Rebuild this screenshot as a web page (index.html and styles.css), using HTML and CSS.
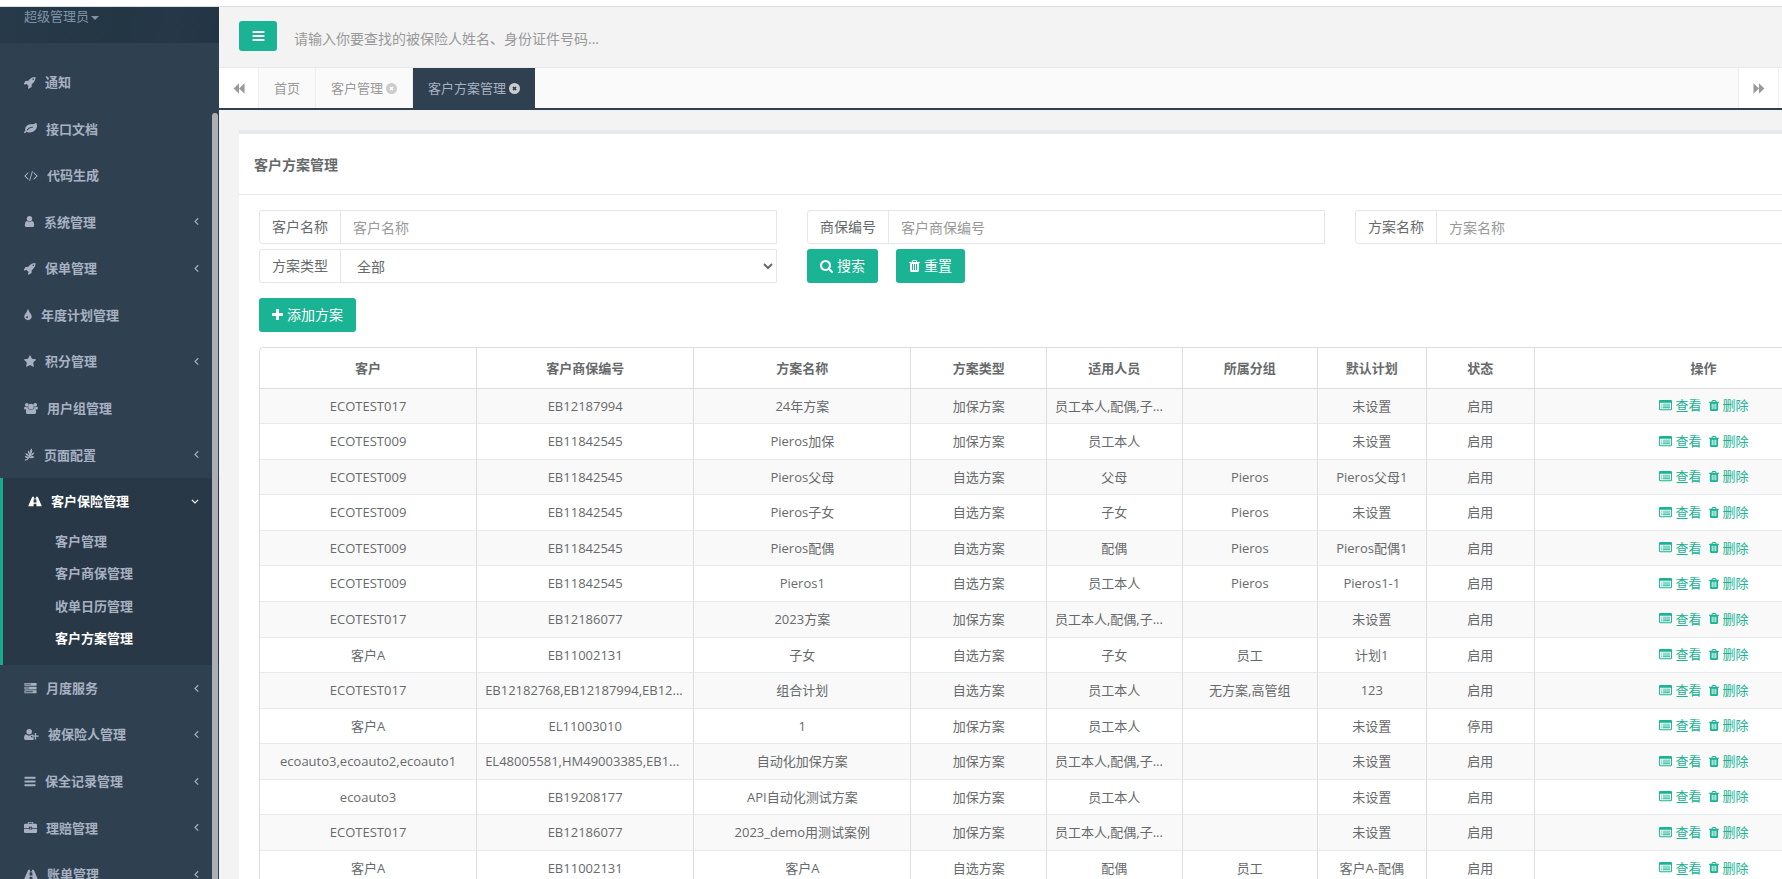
FILE: index.html
```html
<!DOCTYPE html>
<html lang="zh-CN">
<head>
<meta charset="utf-8">
<title>客户方案管理</title>
<link rel="stylesheet" href="styles.css">
</head>
<body>
<svg class="sprite" aria-hidden="true">
  <symbol id="bars" viewBox="128 0 1536 1792"><path d="M1664 1344v128q0 26-19 45t-45 19h-1408q-26 0-45-19t-19-45v-128q0-26 19-45t45-19h1408q26 0 45 19t19 45zm0-512v128q0 26-19 45t-45 19h-1408q-26 0-45-19t-19-45v-128q0-26 19-45t45-19h1408q26 0 45 19t19 45zm0-512v128q0 26-19 45t-45 19h-1408q-26 0-45-19t-19-45v-128q0-26 19-45t45-19h1408q26 0 45 19t19 45z"/></symbol>
  <symbol id="rocket" viewBox="64 0 1664 1792"><path d="M1440 448q0-40-28-68t-68-28-68 28-28 68 28 68 68 28 68-28 28-68zm224-288q0 249-75.500 430.500t-253.500 360.500q-81 80-195 176l-20 379q-2 16-16 26l-384 224q-7 4-16 4-12 0-23-9l-64-64q-13-14-8-32l85-276-281-281-276 85q-3 1-9 1-14 0-23-9l-64-64q-17-19-5-39l224-384q10-14 26-16l379-20q96-114 176-195 188-187 358-258t431-71q14 0 24 9.500t10 22.500z"/></symbol>
  <symbol id="leaf" viewBox="0 0 1792 1792"><path d="M1280 704q0-26-19-45t-45-19q-172 0-318 49.500t-259.500 134-235.500 219.500q-19 21-19 45 0 26 19 45t45 19q24 0 45-19 27-24 74-71t67-66q137-124 268.500-176t313.500-52q26 0 45-19t19-45zm512-198q0 95-20 193-46 224-184.500 383t-357.500 268q-214 108-438 108-148 0-286-47-15-5-88-42t-96-37q-16 0-39.500 32t-45 70-52.500 70-60 32q-43 0-63.500-17.500t-45.500-59.500q-2-4-6-11t-5.500-10-3-9.500-1.500-13.500q0-35 31-73.500t68-65.500 68-56 31-48q0-4-14-38t-16-44q-9-51-9-104 0-115 43.500-220t119-184.500 170.500-139 204-95.500q55-18 145-25.500t179.500-9 178.500-6 163.500-24 113.500-56.500l29.500-29.500 29.500-28 27-20 36.500-16 43.500-4.500q39 0 70.500 46t47.500 112 24 124 8 96z"/></symbol>
  <symbol id="code" viewBox="-64 0 1920 1792"><path d="M553 1399l-50 50q-10 10-23 10t-23-10l-466-466q-10-10-10-23t10-23l466-466q10-10 23-10t23 10l50 50q10 10 10 23t-10 23l-393 393 393 393q10 10 10 23t-10 23zm591-1067l-373 1291q-4 13-15.500 19.500t-23.500 2.500l-62-17q-13-4-19.500-15.500t-2.500-24.500l373-1291q4-13 15.500-19.500t23.500-2.500l62 17q13 4 19.500 15.500t2.500 24.500zm657 651l-466 466q-10 10-23 10t-23-10l-50-50q-10-10-10-23t10-23l393-393-393-393q-10-10-10-23t10-23l50-50q10-10 23-10t23 10l466 466q10 10 10 23t-10 23z"/></symbol>
  <symbol id="user" viewBox="192 0 1408 1792"><path d="M1536 1399q0 109-62.500 187t-150.500 78h-854q-88 0-150.500-78t-62.500-187q0-85 8.500-160.500t31.500-152 58.500-131 94-89 134.500-34.500q131 128 313 128t313-128q76 0 134.500 34.500t94 89 58.500 131 31.500 152 8.500 160.500zm-256-887q0 159-112.500 271.500t-271.500 112.500-271.500-112.500-112.500-271.500 112.500-271.500 271.500-112.500 271.500 112.500 112.500 271.500z"/></symbol>
  <symbol id="tint" viewBox="384 0 1024 1792"><path d="M896 1152q0-36-20-69-1-1-15.500-22.500t-25.500-38-25-44-21-50.500q-4-16-21-16t-21 16q-7 23-21 50.500t-25 44-25.500 38-15.500 22.500q-20 33-20 69 0 53 37.500 90.500t90.500 37.500 90.500-37.500 37.500-90.500zm512-128q0 212-150 362t-362 150-362-150-150-362q0-145 81-275 6-9 62.500-90.500t101-151 99.500-178 83-201.500q9-30 34-47t51-17 51.500 17 33.500 47q28 93 83 201.500t99.500 178 101 151 62.500 90.500q81 127 81 275z"/></symbol>
  <symbol id="star" viewBox="64 0 1664 1792"><path d="M1728 647q0 22-26 48l-363 354 86 500q1 7 1 20 0 21-10.500 35.500t-30.500 14.500q-19 0-40-12l-449-236-449 236q-22 12-40 12-21 0-31.500-14.500t-10.500-35.500q0-6 2-20l86-500-364-354q-25-27-25-48 0-37 56-46l502-73 225-455q19-41 49-41t49 41l225 455 502 73q56 9 56 46z"/></symbol>
  <symbol id="users" viewBox="0 0 1920 1792"><circle cx="384" cy="384" r="256"/><circle cx="1536" cy="384" r="256"/><circle cx="960" cy="640" r="384"/><path d="M593 896Q431 901 328 1024H194Q0 1024 0 858 0 640 90 640q60 0 160 55t290 25q-28 90 53 176zM1327 896q162 5 265 128h134q194 0 194-166 0-218-90-218-60 0-160 55t-290 25q28 90-53 176zM523 1664q-267 0-267-260 0-508 250-508 60 0 190 96t264 96 264-96 190-96q250 0 250 508 0 260-267 260z"/></symbol>
  <symbol id="plant" viewBox="0 0 1408 1792"><path d="M40 1590Q300 1590 460 1420 160 1440 40 1140q300-90 500 150l50-110Q240 1090 90 740q370-30 540 290l20-120Q420 640 510 310q270 180 250 520Q730 420 930 40q300 320 10 760l-60 160Q1010 660 1370 620q-80 380-540 480l-50 90q270-160 610 0-240 300-680 170Q480 1730 70 1760z"/></symbol>
  <symbol id="road" viewBox="0 0 1920 1792"><path fill-rule="evenodd" d="M610 256h210l-20 230h320l-20-230h210q40 0 60 50l507 1170q20 60-20 60H1170l-30-320H780l-30 320H63q-40 0-20-60L550 306q20-50 60-50zM785 600l-35 430h420l-35-430z"/></symbol>
  <symbol id="server" viewBox="0 0 1792 1792"><path fill-rule="evenodd" d="M64 128h1664v384H64zm128 128v128h768V256zM64 640h1664v384H64zm128 128v128h512V768zM64 1152h1664v384H64zm128 128v128h1024v-128z"/><path opacity=".5" d="M192 256h1200v128H192zm0 512h1200v128H192z"/></symbol>
  <symbol id="user-plus" viewBox="0 0 2048 1792"><circle cx="704" cy="512" r="384"/><path d="M1664 1024h352v192h-352v352h-192v-352h-352v-192h352V672h192zM960 1088v192h360v330q-40 54-146 54H267Q0 1664 0 1404q0-508 250-508 60 0 190 84t264 84 264-84 190-84q120 0 170 192z"/></symbol>
  <symbol id="briefcase" viewBox="0 0 1792 1792"><path d="M640 384h512V256H640zM0 960V544q0-160 160-160h352V224q0-96 96-96h576q96 0 96 96v160h352q160 0 160 160v416h-672V800H672v160zm800-32h192v128H800zM0 1056h672v128h448v-128h672v448q0 160-160 160H160Q0 1664 0 1504z"/></symbol>
  <symbol id="angle-left" viewBox="0 0 640 1792"><path fill="none" stroke="currentColor" stroke-width="170" d="M560 440L120 880l440 440"/></symbol>
  <symbol id="angle-down" viewBox="0 0 1152 1792"><path fill="none" stroke="currentColor" stroke-width="170" d="M120 660l456 450 456-450"/></symbol>
  <symbol id="backward" viewBox="0 0 1664 1792"><path d="M840 180v1430L80 896zM1600 180v1430L840 896z"/></symbol>
  <symbol id="forward" viewBox="0 0 1664 1792"><path d="M824 180v1430l760-714zM64 180v1430l760-714z"/></symbol>
  <symbol id="close" viewBox="128 0 1536 1792"><path fill-rule="evenodd" d="M1664 896a768 768 0 1 0-1536 0 768 768 0 0 0 1536 0zM760 600l136 136 136-136 160 160-136 136 136 136-160 160-136-136-136 136-160-160 136-136-136-136z"/></symbol>
  <symbol id="plus" viewBox="192 0 1408 1792"><path d="M1600 736v192q0 40-28 68t-68 28h-416v416q0 40-28 68t-68 28h-192q-40 0-68-28t-28-68v-416h-416q-40 0-68-28t-28-68v-192q0-40 28-68t68-28h416v-416q0-40 28-68t68-28h192q40 0 68 28t28 68v416h416q40 0 68 28t28 68z"/></symbol>
  <symbol id="search" viewBox="64 0 1664 1792"><path d="M1216 832q0-185-131.500-316.500t-316.500-131.500-316.500 131.500-131.500 316.500 131.500 316.500 316.500 131.500 316.500-131.500 131.500-316.500zm512 832q0 52-38 90t-90 38q-54 0-90-38l-343-342q-179 124-399 124-143 0-273.500-55.500t-225-150-150-225-55.500-273.500 55.500-273.500 150-225 225-150 273.500-55.500 273.500 55.500 225 150 150 225 55.500 273.500q0 220-124 399l343 343q37 37 37 90z"/></symbol>
  <symbol id="trash" viewBox="192 0 1408 1792"><path d="M704 1376v-704q0-14-9-23t-23-9h-64q-14 0-23 9t-9 23v704q0 14 9 23t23 9h64q14 0 23-9t9-23zm256 0v-704q0-14-9-23t-23-9h-64q-14 0-23 9t-9 23v704q0 14 9 23t23 9h64q14 0 23-9t9-23zm256 0v-704q0-14-9-23t-23-9h-64q-14 0-23 9t-9 23v704q0 14 9 23t23 9h64q14 0 23-9t9-23zm-544-992h448l-48-117q-7-9-17-11h-317q-10 2-17 11zm928 32v64q0 14-9 23t-23 9h-96v948q0 83-47 143.500t-113 60.500h-832q-66 0-113-58.500t-47-141.500v-952h-96q-14 0-23-9t-9-23v-64q0-14 9-23t23-9h309l70-167q15-37 54-63t79-26h320q40 0 79 26t54 63l70 167h309q14 0 23 9t9 23z"/></symbol>
  <symbol id="list" viewBox="0 0 1792 1792"><path fill-rule="evenodd" d="M160 128h1472q160 0 160 160v1088q0 160-160 160H160Q0 1536 0 1376V288q0-160 160-160zm-32 384v832q0 64 64 64h1408q64 0 64-64V512z"/><path d="M256 640h128v128H256zm256 0h1024v128H512zM256 896h128v128H256zm256 0h1024v128H512zm-256 256h128v128H256zm256 0h1024v128H512z"/></symbol>
</svg>

<div class="app">
  <nav class="sidebar" aria-label="主菜单">
    <div class="profile"><a href="#">超级管理员<span class="caret"></span></a></div>
    <ul class="menu">
      <li><a href="#"><svg class="icon w12"><use href="#rocket"/></svg>通知</a></li>
      <li><a href="#"><svg class="icon w13"><use href="#leaf"/></svg>接口文档</a></li>
      <li><a href="#"><svg class="icon w14"><use href="#code"/></svg>代码生成</a></li>
      <li><a href="#"><svg class="icon w11"><use href="#user"/></svg>系统管理<svg class="icon arrow"><use href="#angle-left"/></svg></a></li>
      <li><a href="#"><svg class="icon w12"><use href="#rocket"/></svg>保单管理<svg class="icon arrow"><use href="#angle-left"/></svg></a></li>
      <li><a href="#"><svg class="icon w8"><use href="#tint"/></svg>年度计划管理</a></li>
      <li><a href="#"><svg class="icon w12"><use href="#star"/></svg>积分管理<svg class="icon arrow"><use href="#angle-left"/></svg></a></li>
      <li><a href="#"><svg class="icon w14"><use href="#users"/></svg>用户组管理</a></li>
      <li><a href="#"><svg class="icon w11"><use href="#plant"/></svg>页面配置<svg class="icon arrow"><use href="#angle-left"/></svg></a></li>
      <li class="active"><a href="#"><svg class="icon w14"><use href="#road"/></svg>客户保险管理<svg class="icon arrow down"><use href="#angle-down"/></svg></a>
        <ul class="submenu">
          <li><a href="#">客户管理</a></li>
          <li><a href="#">客户商保管理</a></li>
          <li><a href="#">收单日历管理</a></li>
          <li><a href="#" class="current">客户方案管理</a></li>
        </ul>
      </li>
      <li><a href="#"><svg class="icon w13"><use href="#server"/></svg>月度服务<svg class="icon arrow"><use href="#angle-left"/></svg></a></li>
      <li><a href="#"><svg class="icon w15"><use href="#user-plus"/></svg>被保险人管理<svg class="icon arrow"><use href="#angle-left"/></svg></a></li>
      <li><a href="#"><svg class="icon w12"><use href="#bars"/></svg>保全记录管理<svg class="icon arrow"><use href="#angle-left"/></svg></a></li>
      <li><a href="#"><svg class="icon w13"><use href="#briefcase"/></svg>理赔管理<svg class="icon arrow"><use href="#angle-left"/></svg></a></li>
      <li><a href="#"><svg class="icon w14"><use href="#road"/></svg>账单管理<svg class="icon arrow"><use href="#angle-left"/></svg></a></li>
    </ul>
    <div class="thumb"></div>
  </nav>

  <div class="main">
    <header class="topbar">
      <button type="button" class="btn toggle" aria-label="切换菜单"><svg class="icon w13"><use href="#bars"/></svg></button>
      <input class="global-search" type="text" aria-label="查找被保险人" placeholder="请输入你要查找的被保险人姓名、身份证件号码...">
    </header>
    <div class="tabs">
      <button type="button" class="roll left" aria-label="向左"><svg class="icon w12"><use href="#backward"/></svg></button>
      <a class="tab" href="#">首页</a>
      <a class="tab" href="#">客户管理<svg class="icon w11"><use href="#close"/></svg></a>
      <a class="tab selected" href="#">客户方案管理<svg class="icon w11"><use href="#close"/></svg></a>
      <button type="button" class="roll right" aria-label="向右"><svg class="icon w12"><use href="#forward"/></svg></button>
      <div class="tab-tools"></div>
    </div>

    <section class="panel">
      <h5 class="panel-title">客户方案管理</h5>
      <div class="panel-body">
        <form class="filters">
          <div class="group"><label for="customer">客户名称</label><input id="customer" type="text" placeholder="客户名称"></div>
          <div class="group"><label for="number">商保编号</label><input id="number" type="text" placeholder="客户商保编号"></div>
          <div class="group"><label for="plan">方案名称</label><input id="plan" type="text" placeholder="方案名称"></div>
          <div class="group"><label for="type">方案类型</label><select id="type"><option>全部</option></select></div>
          <div class="buttons">
            <button type="button" class="btn"><svg class="icon w13"><use href="#search"/></svg>搜索</button>
            <button type="button" class="btn"><svg class="icon w11"><use href="#trash"/></svg>重置</button>
          </div>
        </form>
        <button type="button" class="btn add"><svg class="icon w11"><use href="#plus"/></svg>添加方案</button>
        <table class="grid">
          <colgroup><col class="c-wide"><col class="c-wide"><col class="c-wide"><col class="c-mid"><col class="c-mid"><col class="c-mid"><col class="c-small"><col class="c-small"><col></colgroup>
          <thead><tr><th>客户</th><th>客户商保编号</th><th>方案名称</th><th>方案类型</th><th>适用人员</th><th>所属分组</th><th>默认计划</th><th>状态</th><th>操作</th></tr></thead>
          <tbody>
            <tr><td>ECOTEST017</td><td>EB12187994</td><td>24年方案</td><td>加保方案</td><td class="long">员工本人,配偶,子...</td><td></td><td>未设置</td><td>启用</td><td><a href="#"><svg class="icon w13"><use href="#list"/></svg>查看</a><a href="#"><svg class="icon w10"><use href="#trash"/></svg>删除</a></td></tr>
            <tr><td>ECOTEST009</td><td>EB11842545</td><td>Pieros加保</td><td>加保方案</td><td>员工本人</td><td></td><td>未设置</td><td>启用</td><td><a href="#"><svg class="icon w13"><use href="#list"/></svg>查看</a><a href="#"><svg class="icon w10"><use href="#trash"/></svg>删除</a></td></tr>
            <tr><td>ECOTEST009</td><td>EB11842545</td><td>Pieros父母</td><td>自选方案</td><td>父母</td><td>Pieros</td><td>Pieros父母1</td><td>启用</td><td><a href="#"><svg class="icon w13"><use href="#list"/></svg>查看</a><a href="#"><svg class="icon w10"><use href="#trash"/></svg>删除</a></td></tr>
            <tr><td>ECOTEST009</td><td>EB11842545</td><td>Pieros子女</td><td>自选方案</td><td>子女</td><td>Pieros</td><td>未设置</td><td>启用</td><td><a href="#"><svg class="icon w13"><use href="#list"/></svg>查看</a><a href="#"><svg class="icon w10"><use href="#trash"/></svg>删除</a></td></tr>
            <tr><td>ECOTEST009</td><td>EB11842545</td><td>Pieros配偶</td><td>自选方案</td><td>配偶</td><td>Pieros</td><td>Pieros配偶1</td><td>启用</td><td><a href="#"><svg class="icon w13"><use href="#list"/></svg>查看</a><a href="#"><svg class="icon w10"><use href="#trash"/></svg>删除</a></td></tr>
            <tr><td>ECOTEST009</td><td>EB11842545</td><td>Pieros1</td><td>自选方案</td><td>员工本人</td><td>Pieros</td><td>Pieros1-1</td><td>启用</td><td><a href="#"><svg class="icon w13"><use href="#list"/></svg>查看</a><a href="#"><svg class="icon w10"><use href="#trash"/></svg>删除</a></td></tr>
            <tr><td>ECOTEST017</td><td>EB12186077</td><td>2023方案</td><td>加保方案</td><td class="long">员工本人,配偶,子...</td><td></td><td>未设置</td><td>启用</td><td><a href="#"><svg class="icon w13"><use href="#list"/></svg>查看</a><a href="#"><svg class="icon w10"><use href="#trash"/></svg>删除</a></td></tr>
            <tr><td>客户A</td><td>EB11002131</td><td>子女</td><td>自选方案</td><td>子女</td><td>员工</td><td>计划1</td><td>启用</td><td><a href="#"><svg class="icon w13"><use href="#list"/></svg>查看</a><a href="#"><svg class="icon w10"><use href="#trash"/></svg>删除</a></td></tr>
            <tr><td>ECOTEST017</td><td class="long">EB12182768,EB12187994,EB12...</td><td>组合计划</td><td>自选方案</td><td>员工本人</td><td>无方案,高管组</td><td>123</td><td>启用</td><td><a href="#"><svg class="icon w13"><use href="#list"/></svg>查看</a><a href="#"><svg class="icon w10"><use href="#trash"/></svg>删除</a></td></tr>
            <tr><td>客户A</td><td>EL11003010</td><td>1</td><td>加保方案</td><td>员工本人</td><td></td><td>未设置</td><td>停用</td><td><a href="#"><svg class="icon w13"><use href="#list"/></svg>查看</a><a href="#"><svg class="icon w10"><use href="#trash"/></svg>删除</a></td></tr>
            <tr><td>ecoauto3,ecoauto2,ecoauto1</td><td class="long">EL48005581,HM49003385,EB1...</td><td>自动化加保方案</td><td>加保方案</td><td class="long">员工本人,配偶,子...</td><td></td><td>未设置</td><td>启用</td><td><a href="#"><svg class="icon w13"><use href="#list"/></svg>查看</a><a href="#"><svg class="icon w10"><use href="#trash"/></svg>删除</a></td></tr>
            <tr><td>ecoauto3</td><td>EB19208177</td><td>API自动化测试方案</td><td>加保方案</td><td>员工本人</td><td></td><td>未设置</td><td>启用</td><td><a href="#"><svg class="icon w13"><use href="#list"/></svg>查看</a><a href="#"><svg class="icon w10"><use href="#trash"/></svg>删除</a></td></tr>
            <tr><td>ECOTEST017</td><td>EB12186077</td><td>2023_demo用测试案例</td><td>加保方案</td><td class="long">员工本人,配偶,子...</td><td></td><td>未设置</td><td>启用</td><td><a href="#"><svg class="icon w13"><use href="#list"/></svg>查看</a><a href="#"><svg class="icon w10"><use href="#trash"/></svg>删除</a></td></tr>
            <tr><td>客户A</td><td>EB11002131</td><td>客户A</td><td>自选方案</td><td>配偶</td><td>员工</td><td>客户A-配偶</td><td>启用</td><td><a href="#"><svg class="icon w13"><use href="#list"/></svg>查看</a><a href="#"><svg class="icon w10"><use href="#trash"/></svg>删除</a></td></tr>
          </tbody>
        </table>
      </div>
    </section>
  </div>
</div>
</body>
</html>
```
FILE: styles.css
```css
*, *::before { box-sizing: border-box; }

html, body { height: 100%; }

body {
  margin: 0;
  overflow: hidden;
  display: flex;
  flex-direction: column;
  background: #f3f3f4;
  color: #676a6c;
  font-family: "Open Sans", "Noto Sans CJK SC", sans-serif;
  font-size: 13px;
  line-height: 1.42857143;
}

body::before {
  content: "";
  flex: none;
  height: 7px;
  background: #fff;
  border-bottom: 1px solid #dcdede;
}

a { color: inherit; text-decoration: none; }
ul { list-style: none; margin: 0; padding: 0; }
button, input, select { font: inherit; }

.sprite { position: absolute; width: 0; height: 0; }
.icon { flex: none; height: 13px; fill: currentColor; }
.w8 { width: 8px; }
.w10 { width: 10px; }
.w11 { width: 11px; }
.w12 { width: 12px; }
.w13 { width: 13px; }
.w14 { width: 14px; }
.w15 { width: 15px; }

.app {
  flex: 1;
  min-height: 0;
  display: flex;
  min-width: 1913px;
}

/* Sidebar */
.sidebar {
  position: relative;
  flex: none;
  width: 219px;
  overflow: hidden;
  background: #2f4050;
  color: #a7b1c2;
}
.profile {
  height: 36px;
  margin-bottom: 16px;
  padding: 0 24px;
  background: linear-gradient(100deg, #263a49 0%, #233644 55%, #263847 78%, #223543 100%);
  color: #8095a8;
}
.caret {
  display: inline-block;
  margin-left: 2px;
  vertical-align: middle;
  border: 4px solid transparent;
  border-top-color: currentColor;
  border-bottom: 0;
}
.menu a {
  display: flex;
  align-items: center;
  gap: 9px;
  padding: 14px 20px 14px 24px;
  font-weight: 600;
}
.arrow { width: 5px; margin-left: auto; }
.arrow.down { width: 8px; }
.active { border-left: 3px solid #19aa8d; background: #293846; }
.menu .active > a { padding-left: 25px; color: #fff; }
.submenu { padding-bottom: 10px; }
.menu .submenu a { padding: 7px 10px 7px 52px; }
.submenu .current { color: #fff; }
.thumb {
  position: absolute;
  top: 106px;
  right: 1px;
  bottom: -8px;
  width: 6px;
  border-radius: 4px;
  background: #adb0b2;
}

/* Top bar and tabs */
.main { flex: 1; min-width: 0; }
.topbar {
  display: flex;
  align-items: flex-start;
  height: 61px;
  padding: 14px 20px 0;
  border-bottom: 1px solid #e7eaec;
  background: #f3f3f4;
}
.btn {
  display: inline-flex;
  align-items: center;
  justify-content: center;
  gap: 4px;
  height: 34px;
  padding: 0 13px;
  border: 0;
  border-radius: 3px;
  background: #1ab394;
  color: #fff;
  font-size: 14px;
}
.btn .icon { height: 14px; }
.toggle { width: 38px; height: 30px; }
.global-search {
  width: 400px;
  height: 34px;
  margin-left: 15px;
  padding: 0 2px;
  border: 0;
  background: transparent;
  font-size: 14px;
}
::placeholder { color: #999; opacity: 1; }

.tabs {
  display: flex;
  height: 42px;
  border-bottom: 2px solid #2f4050;
  background: #fafafa;
  color: #999;
}
.tab {
  display: flex;
  align-items: center;
  gap: 3px;
  padding: 0 15px;
  border-right: 1px solid #eee;
}
.tab .icon { color: #ccc; }
.tab.selected { border-right: 0; background: #2f4050; color: #a7b1c2; }
.roll {
  width: 40px;
  padding: 0;
  border: 0;
  border-right: 1px solid #eee;
  background: #fff;
  color: #999;
}
.roll .icon { display: block; margin: 0 auto; }
.right { width: 41px; margin-left: auto; border-left: 1px solid #eee; }
.tab-tools { width: 134px; background: #fff; }

/* Panel */
.panel { margin: 20px 20px 0; border-top: 4px solid #e7eaec; background: #fff; }
.panel-title {
  height: 60px;
  margin: 0;
  padding: 21px 15px 0;
  font-size: 14px;
  line-height: 20px;
  font-weight: 600;
}
.panel-body { padding: 15px 20px; border-top: 1px solid #e7eaec; }
.filters {
  display: grid;
  grid-template-columns: repeat(3, 1fr);
  gap: 5px 30px;
  margin-bottom: 15px;
  font-size: 14px;
}
.group {
  display: flex;
  height: 34px;
  border: 1px solid #e5e6e7;
  border-radius: 3px 0 0 3px;
}
.group label {
  padding: 6px 12px 0;
  border-right: 1px solid #e5e6e7;
}
.group input, .group select {
  flex: 1;
  min-width: 0;
  padding: 2px 12px 0;
  border: 0;
  background: #fff;
  color: inherit;
}
.group select { padding: 0 0 0 12px; }
.buttons { display: flex; gap: 18px; }
.add { margin-bottom: 15px; }

.grid {
  width: 100%;
  table-layout: fixed;
  border: 1px solid #ddd;
  border-radius: 4px 4px 0 0;
  border-spacing: 0;
  text-align: center;
}
.c-wide { width: 13.47%; }
.c-mid { width: 8.41%; }
.c-small { width: 6.73%; }
.grid th, .grid td {
  overflow: hidden;
  padding: 8px 0;
  border-right: 1px solid #ddd;
  border-bottom: 1px solid #e7eaec;
  white-space: nowrap;
}
.grid th { padding: 11px 0 10px; border-bottom-color: #ddd; font-weight: 600; }
.grid .long { padding-left: 8px; text-align: left; }
.grid th:last-child, .grid td:last-child { border-right: 0; }
.grid tbody tr:nth-child(odd) { background: #f9f9f9; }
.grid a {
  display: inline-flex;
  align-items: center;
  gap: 4px;
  height: 18px;
  vertical-align: top;
  color: #1ab394;
}
.grid a + a { margin-left: 7px; }
```
